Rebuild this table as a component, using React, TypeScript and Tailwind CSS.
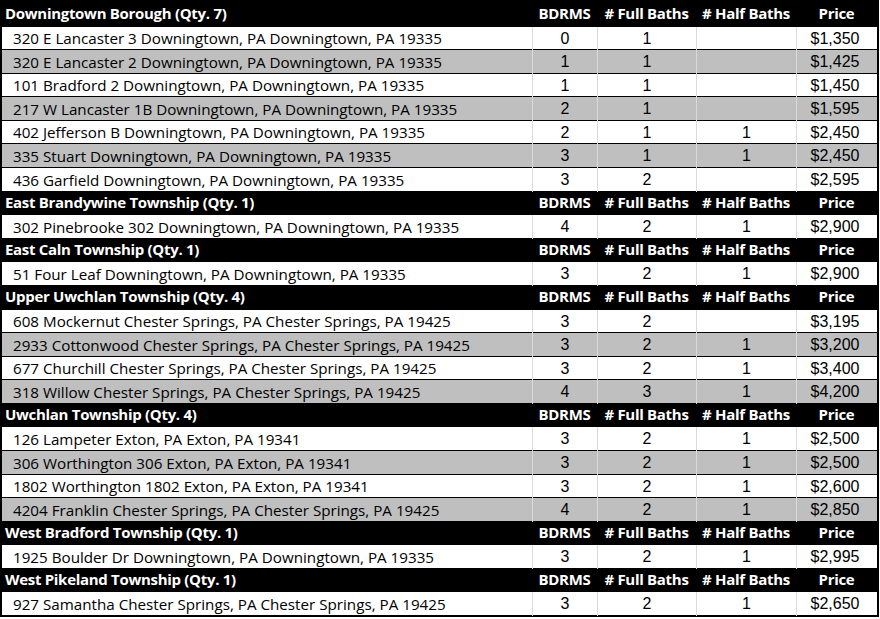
type Listing = { address: string; beds: string; full: string; half: string; price: string };
type Section = { name: string; rows: Listing[] };

const sections: Section[] = [
  {
    name: 'Downingtown Borough (Qty. 7)',
    rows: [
      { address: '320 E Lancaster 3 Downingtown, PA Downingtown, PA 19335', beds: '0', full: '1', half: '', price: '$1,350' },
      { address: '320 E Lancaster 2 Downingtown, PA Downingtown, PA 19335', beds: '1', full: '1', half: '', price: '$1,425' },
      { address: '101 Bradford 2 Downingtown, PA Downingtown, PA 19335', beds: '1', full: '1', half: '', price: '$1,450' },
      { address: '217 W Lancaster 1B Downingtown, PA Downingtown, PA 19335', beds: '2', full: '1', half: '', price: '$1,595' },
      { address: '402 Jefferson B Downingtown, PA Downingtown, PA 19335', beds: '2', full: '1', half: '1', price: '$2,450' },
      { address: '335 Stuart Downingtown, PA Downingtown, PA 19335', beds: '3', full: '1', half: '1', price: '$2,450' },
      { address: '436 Garfield Downingtown, PA Downingtown, PA 19335', beds: '3', full: '2', half: '', price: '$2,595' },
    ],
  },
  {
    name: 'East Brandywine Township (Qty. 1)',
    rows: [
      { address: '302 Pinebrooke 302 Downingtown, PA Downingtown, PA 19335', beds: '4', full: '2', half: '1', price: '$2,900' },
    ],
  },
  {
    name: 'East Caln Township (Qty. 1)',
    rows: [
      { address: '51 Four Leaf Downingtown, PA Downingtown, PA 19335', beds: '3', full: '2', half: '1', price: '$2,900' },
    ],
  },
  {
    name: 'Upper Uwchlan Township (Qty. 4)',
    rows: [
      { address: '608 Mockernut Chester Springs, PA Chester Springs, PA 19425', beds: '3', full: '2', half: '', price: '$3,195' },
      { address: '2933 Cottonwood Chester Springs, PA Chester Springs, PA 19425', beds: '3', full: '2', half: '1', price: '$3,200' },
      { address: '677 Churchill Chester Springs, PA Chester Springs, PA 19425', beds: '3', full: '2', half: '1', price: '$3,400' },
      { address: '318 Willow Chester Springs, PA Chester Springs, PA 19425', beds: '4', full: '3', half: '1', price: '$4,200' },
    ],
  },
  {
    name: 'Uwchlan Township (Qty. 4)',
    rows: [
      { address: '126 Lampeter Exton, PA Exton, PA 19341', beds: '3', full: '2', half: '1', price: '$2,500' },
      { address: '306 Worthington 306 Exton, PA Exton, PA 19341', beds: '3', full: '2', half: '1', price: '$2,500' },
      { address: '1802 Worthington 1802 Exton, PA Exton, PA 19341', beds: '3', full: '2', half: '1', price: '$2,600' },
      { address: '4204 Franklin Chester Springs, PA Chester Springs, PA 19425', beds: '4', full: '2', half: '1', price: '$2,850' },
    ],
  },
  {
    name: 'West Bradford Township (Qty. 1)',
    rows: [
      { address: '1925 Boulder Dr Downingtown, PA Downingtown, PA 19335', beds: '3', full: '2', half: '1', price: '$2,995' },
    ],
  },
  {
    name: 'West Pikeland Township (Qty. 1)',
    rows: [
      { address: '927 Samantha Chester Springs, PA Chester Springs, PA 19425', beds: '3', full: '2', half: '1', price: '$2,650' },
    ],
  },
];

const cols = 'grid grid-cols-[530px_65px_99px_100px_81px]';

function HeaderRow({ name }: { name: string }) {
  return (
    <div className={`${cols} h-[23.58px] bg-black text-white font-bold text-[15px] tracking-[-0.3px] font-['Open_Sans',sans-serif] items-center leading-none`}>
      <div className="pl-[3px] whitespace-nowrap">{name}</div>
      <div className="text-center whitespace-nowrap">BDRMS</div>
      <div className="text-center whitespace-nowrap"># Full Baths</div>
      <div className="text-center whitespace-nowrap"># Half Baths</div>
      <div className="text-center whitespace-nowrap">Price</div>
    </div>
  );
}

function DataRow({ row, shaded }: { row: Listing; shaded: boolean }) {
  const num = "flex items-center justify-center h-full border-l border-[#d9d9d9] font-['Liberation_Sans',Arial,sans-serif] text-[16px]";
  return (
    <div
      className={`${cols} h-[23.58px] box-border border-t border-black text-black ${shaded ? 'bg-[#bfbfbf]' : 'bg-white'}`}
    >
      <div className="flex items-center h-full pl-[11px] font-['Open_Sans',sans-serif] text-[15.2px] whitespace-nowrap">
        {row.address}
      </div>
      <div className={`${num} ${shaded ? 'border-[#bfbfbf]' : ''}`}>{row.beds}</div>
      <div className={`${num} ${shaded ? 'border-[#bfbfbf]' : ''}`}>{row.full}</div>
      <div className={`${num} ${shaded ? 'border-[#bfbfbf]' : ''}`}>{row.half}</div>
      <div className={`${num} pr-[4px] ${shaded ? 'border-[#bfbfbf]' : ''}`}>{row.price}</div>
    </div>
  );
}

export default function App() {
  return (
    <div className="w-[880px] h-[619px] bg-white">
      <div className="w-[879px] border-2 border-black box-border">
        {sections.map((section) => (
          <div key={section.name}>
            <HeaderRow name={section.name} />
            {section.rows.map((row, i) => (
              <DataRow key={row.address} row={row} shaded={i % 2 === 1} />
            ))}
          </div>
        ))}
      </div>
    </div>
  );
}
